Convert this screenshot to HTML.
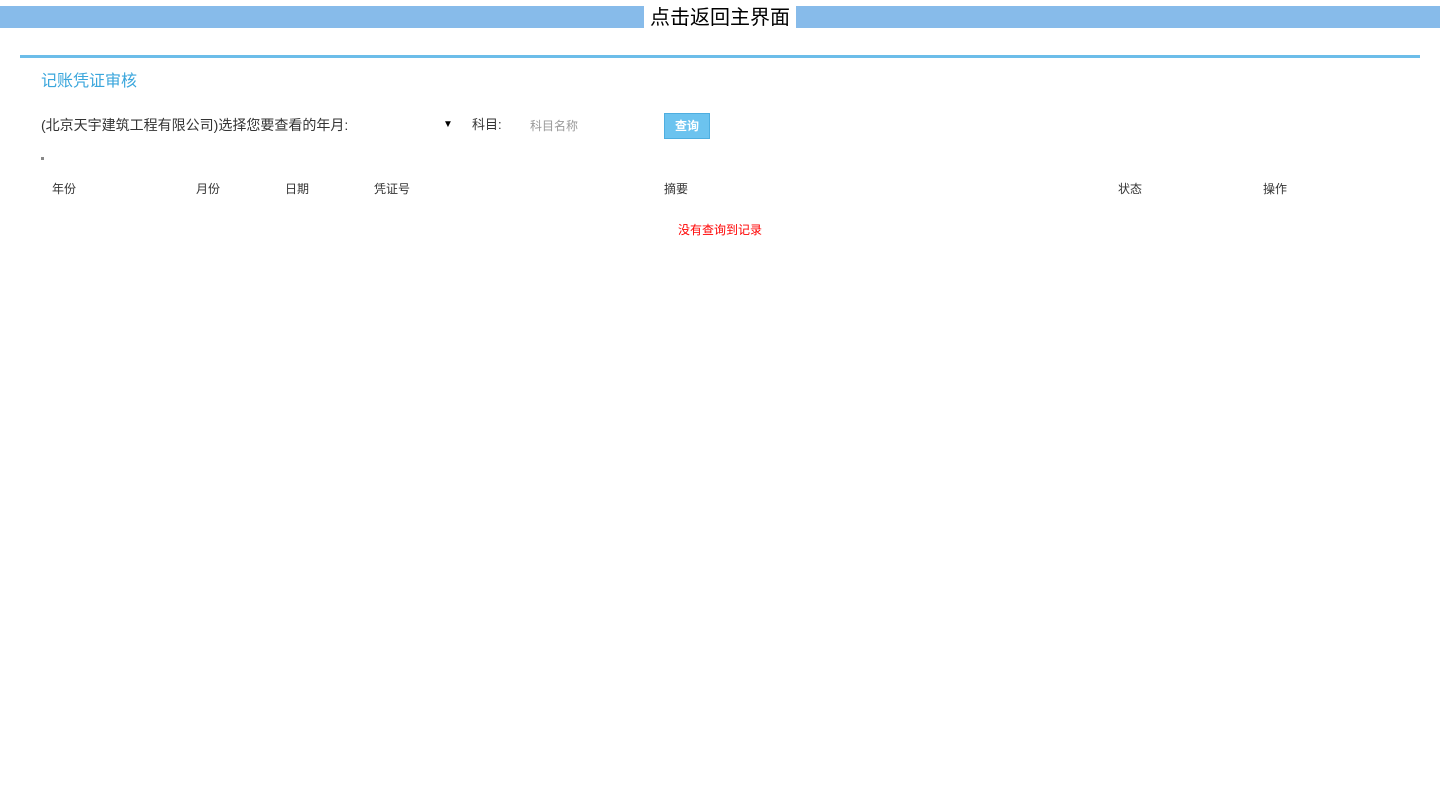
<!DOCTYPE html>
<html><head><meta charset="utf-8"><style>
body{margin:0;background:#fff;font-family:"Liberation Sans","Noto Sans CJK SC",sans-serif;width:1440px;height:789px;position:relative;overflow:hidden;}
.a{position:absolute;white-space:nowrap;}
</style></head><body>
<div class="a" style="left:0;top:6px;width:1440px;height:22px;background:#87bbea;"></div>
<div class="a" style="left:644px;top:6px;width:152px;height:22px;background:#fff;font-size:20px;line-height:24px;text-align:center;color:#000;">点击返回主界面</div>
<div class="a" style="left:20px;top:55px;width:1400px;height:3px;background:#6cbde9;"></div>
<div class="a" style="left:41px;top:72px;font-size:16px;line-height:20px;color:#3aa6dc;">记账凭证审核</div>
<div class="a" style="left:41px;top:116px;font-size:14px;line-height:18px;color:#333;">(北京天宇建筑工程有限公司)选择您要查看的年月:</div>
<div class="a" style="left:443px;top:117px;font-size:10px;line-height:16px;color:#000;">▼</div>
<div class="a" style="left:472px;top:116px;font-size:13px;line-height:18px;color:#333;">科目:</div>
<div class="a" style="left:530px;top:118px;font-size:12px;line-height:16px;color:#999;">科目名称</div>
<div class="a" style="left:664px;top:113px;width:44px;height:24px;background:#6cc3ef;border:1px solid #4eaee0;color:#fff;font-size:12px;font-weight:bold;line-height:24px;text-align:center;">查询</div>
<div class="a" style="left:41px;top:157px;width:3px;height:3px;background:#888;"></div>
<div class="a" style="left:52px;top:181px;font-size:12px;line-height:16px;color:#333;">年份</div>
<div class="a" style="left:196px;top:181px;font-size:12px;line-height:16px;color:#333;">月份</div>
<div class="a" style="left:285px;top:181px;font-size:12px;line-height:16px;color:#333;">日期</div>
<div class="a" style="left:374px;top:181px;font-size:12px;line-height:16px;color:#333;">凭证号</div>
<div class="a" style="left:664px;top:181px;font-size:12px;line-height:16px;color:#333;">摘要</div>
<div class="a" style="left:1118px;top:181px;font-size:12px;line-height:16px;color:#333;">状态</div>
<div class="a" style="left:1263px;top:181px;font-size:12px;line-height:16px;color:#333;">操作</div>
<div class="a" style="left:678px;top:222px;font-size:12px;line-height:16px;color:#f00;">没有查询到记录</div>
</body></html>
